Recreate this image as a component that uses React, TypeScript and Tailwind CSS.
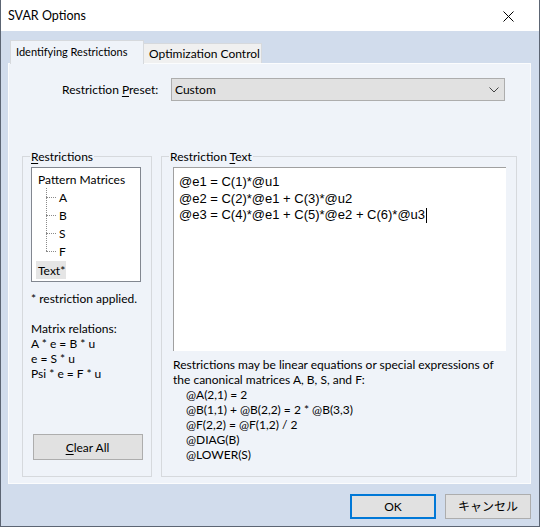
import type { ReactNode } from 'react'

const ui = "font-['Lato','Noto_Sans_CJK_JP',sans-serif] text-[12px] leading-[15px] text-black whitespace-nowrap"

function Mn({ children }: { children: ReactNode }) {
  return <span className="underline underline-offset-2">{children}</span>
}

function GroupBox({ legend, className, children }: { legend: ReactNode; className: string; children: ReactNode }) {
  return (
    <fieldset className="border border-[#d6d9dd]">
      <legend className="ml-[7px] px-[1px]">{legend}</legend>
      <div className={className}>{children}</div>
    </fieldset>
  )
}

function TreeItem({ label }: { label: string }) {
  return (
    <div className="flex h-[18px] items-center">
      <span className="ml-[8px] w-[10px] border-t border-dotted border-[#8a8a8a]" />
      <span className="ml-[3px]">{label}</span>
    </div>
  )
}

function WinButton({ children, primary }: { children: ReactNode; primary?: boolean }) {
  return (
    <button
      type="button"
      className={`flex h-[25px] w-[86px] items-center justify-center bg-[#e1e1e1] ${
        primary ? 'border-2 border-[#0078d7]' : 'border border-[#adadad]'
      }`}
    >
      {children}
    </button>
  )
}

export default function App() {
  return (
    <div className={`flex h-[527px] w-[540px] flex-col border-x border-b border-[#5c6573] ${ui}`}>
      <div className="flex h-[31px] shrink-0 items-center justify-between bg-white pl-[7px] pr-[25px]">
        <span className="text-[12.5px]">SVAR Options</span>
        <svg width="11" height="11" viewBox="0 0 11 11" className="mt-[1px]">
          <path d="M0.5 0.5 L10.5 10.5 M10.5 0.5 L0.5 10.5" stroke="#000" strokeWidth="1" fill="none" />
        </svg>
      </div>

      <div className="flex flex-1 flex-col bg-[#d1dcec] px-[7px] pt-[9px]">
        <div className="flex items-end pl-[2px]">
          <div className="z-10 -mb-px flex h-[24px] w-[134px] items-start border border-b-0 border-[#d6d9dd] bg-[#eff3f9] pl-[5px] pt-[3px] text-[11px]">
            Identifying Restrictions
          </div>
          <div className="flex h-[20px] w-[118px] items-start border border-b-0 border-l-0 border-[#d6d9dd] bg-[#f0f0f0] pl-[5px] pt-[2px]">
            Optimization Control
          </div>
        </div>

        <div className="flex h-[421px] w-[523px] flex-col border border-[#fbfcfd] bg-[#eff3f9] pl-[13px]">
          <div className="mt-[14px] flex items-center">
            <span className="ml-[40px] w-[109px]">
              Restriction <Mn>P</Mn>reset:
            </span>
            <div className="flex h-[23px] w-[334px] items-center justify-between border border-[#adadad] bg-[#e1e1e1] pl-[3px] pr-[5px]">
              <span>Custom</span>
              <svg width="10" height="6" viewBox="0 0 10 6">
                <path d="M0.5 0.5 L5 5 L9.5 0.5" stroke="#444" strokeWidth="1" fill="none" />
              </svg>
            </div>
          </div>

          <div className="mt-[48px] flex gap-[9px]">
            <GroupBox legend={<><Mn>R</Mn>estrictions</>} className="flex h-[312px] w-[128px] flex-col px-[8px] pb-[16px]">
              <div className="mt-[3px] h-[115px] w-[110px] border border-[#828790] bg-white pl-[6px] pt-[2px]">
                <div className="flex h-[18px] items-center">Pattern Matrices</div>
                <div className="relative">
                  <span className="absolute left-[8px] top-0 h-[63px] border-l border-dotted border-[#8a8a8a]" />
                  <TreeItem label="A" />
                  <TreeItem label="B" />
                  <TreeItem label="S" />
                  <TreeItem label="F" />
                </div>
                <div className="-ml-[2px] mt-px flex h-[18px] w-[30px] items-center bg-[#e5e5e5] pl-[2px]">Text*</div>
              </div>
              <div className="mt-[9px]">* restriction applied.</div>
              <div className="mt-[15px]">Matrix relations:</div>
              <div>A * e = B * u</div>
              <div>e = S * u</div>
              <div>Psi * e = F * u</div>
              <div className="mt-auto flex justify-center pl-[1px]">
                <button type="button" className="flex h-[26px] w-[110px] items-center justify-center border border-[#adadad] bg-[#e1e1e1]">
                  <span><Mn>C</Mn>lear All</span>
                </button>
              </div>
            </GroupBox>

            <GroupBox legend={<>Restriction <Mn>T</Mn>ext</>} className="flex h-[312px] w-[354px] flex-col px-[11px]">
              <div className="mt-[3px] h-[184px] w-[333px] border-l border-t border-[#a0a0a0] bg-white pl-[5px] pt-[6px] font-['Liberation_Sans',sans-serif] text-[13px] leading-[16.5px]">
                <div>@e1 = C(1)*@u1</div>
                <div>@e2 = C(2)*@e1 + C(3)*@u2</div>
                <div className="flex items-center">
                  @e3 = C(4)*@e1 + C(5)*@e2 + C(6)*@u3
                  <span className="ml-px inline-block h-[15px] w-px bg-black" />
                </div>
              </div>
              <div className="mt-[6px]">
                <div>Restrictions may be linear equations or special expressions of</div>
                <div>the canonical matrices A, B, S, and F:</div>
                <div className="pl-[13px]">
                  <div>@A(2,1) = 2</div>
                  <div>@B(1,1) + @B(2,2) = 2 * @B(3,3)</div>
                  <div>@F(2,2) = @F(1,2) / 2</div>
                  <div>@DIAG(B)</div>
                  <div>@LOWER(S)</div>
                </div>
              </div>
            </GroupBox>
          </div>
        </div>

        <div className="mt-[10px] flex justify-end gap-[9px] pr-px">
          <WinButton primary>OK</WinButton>
          <WinButton>キャンセル</WinButton>
        </div>
      </div>
    </div>
  )
}
